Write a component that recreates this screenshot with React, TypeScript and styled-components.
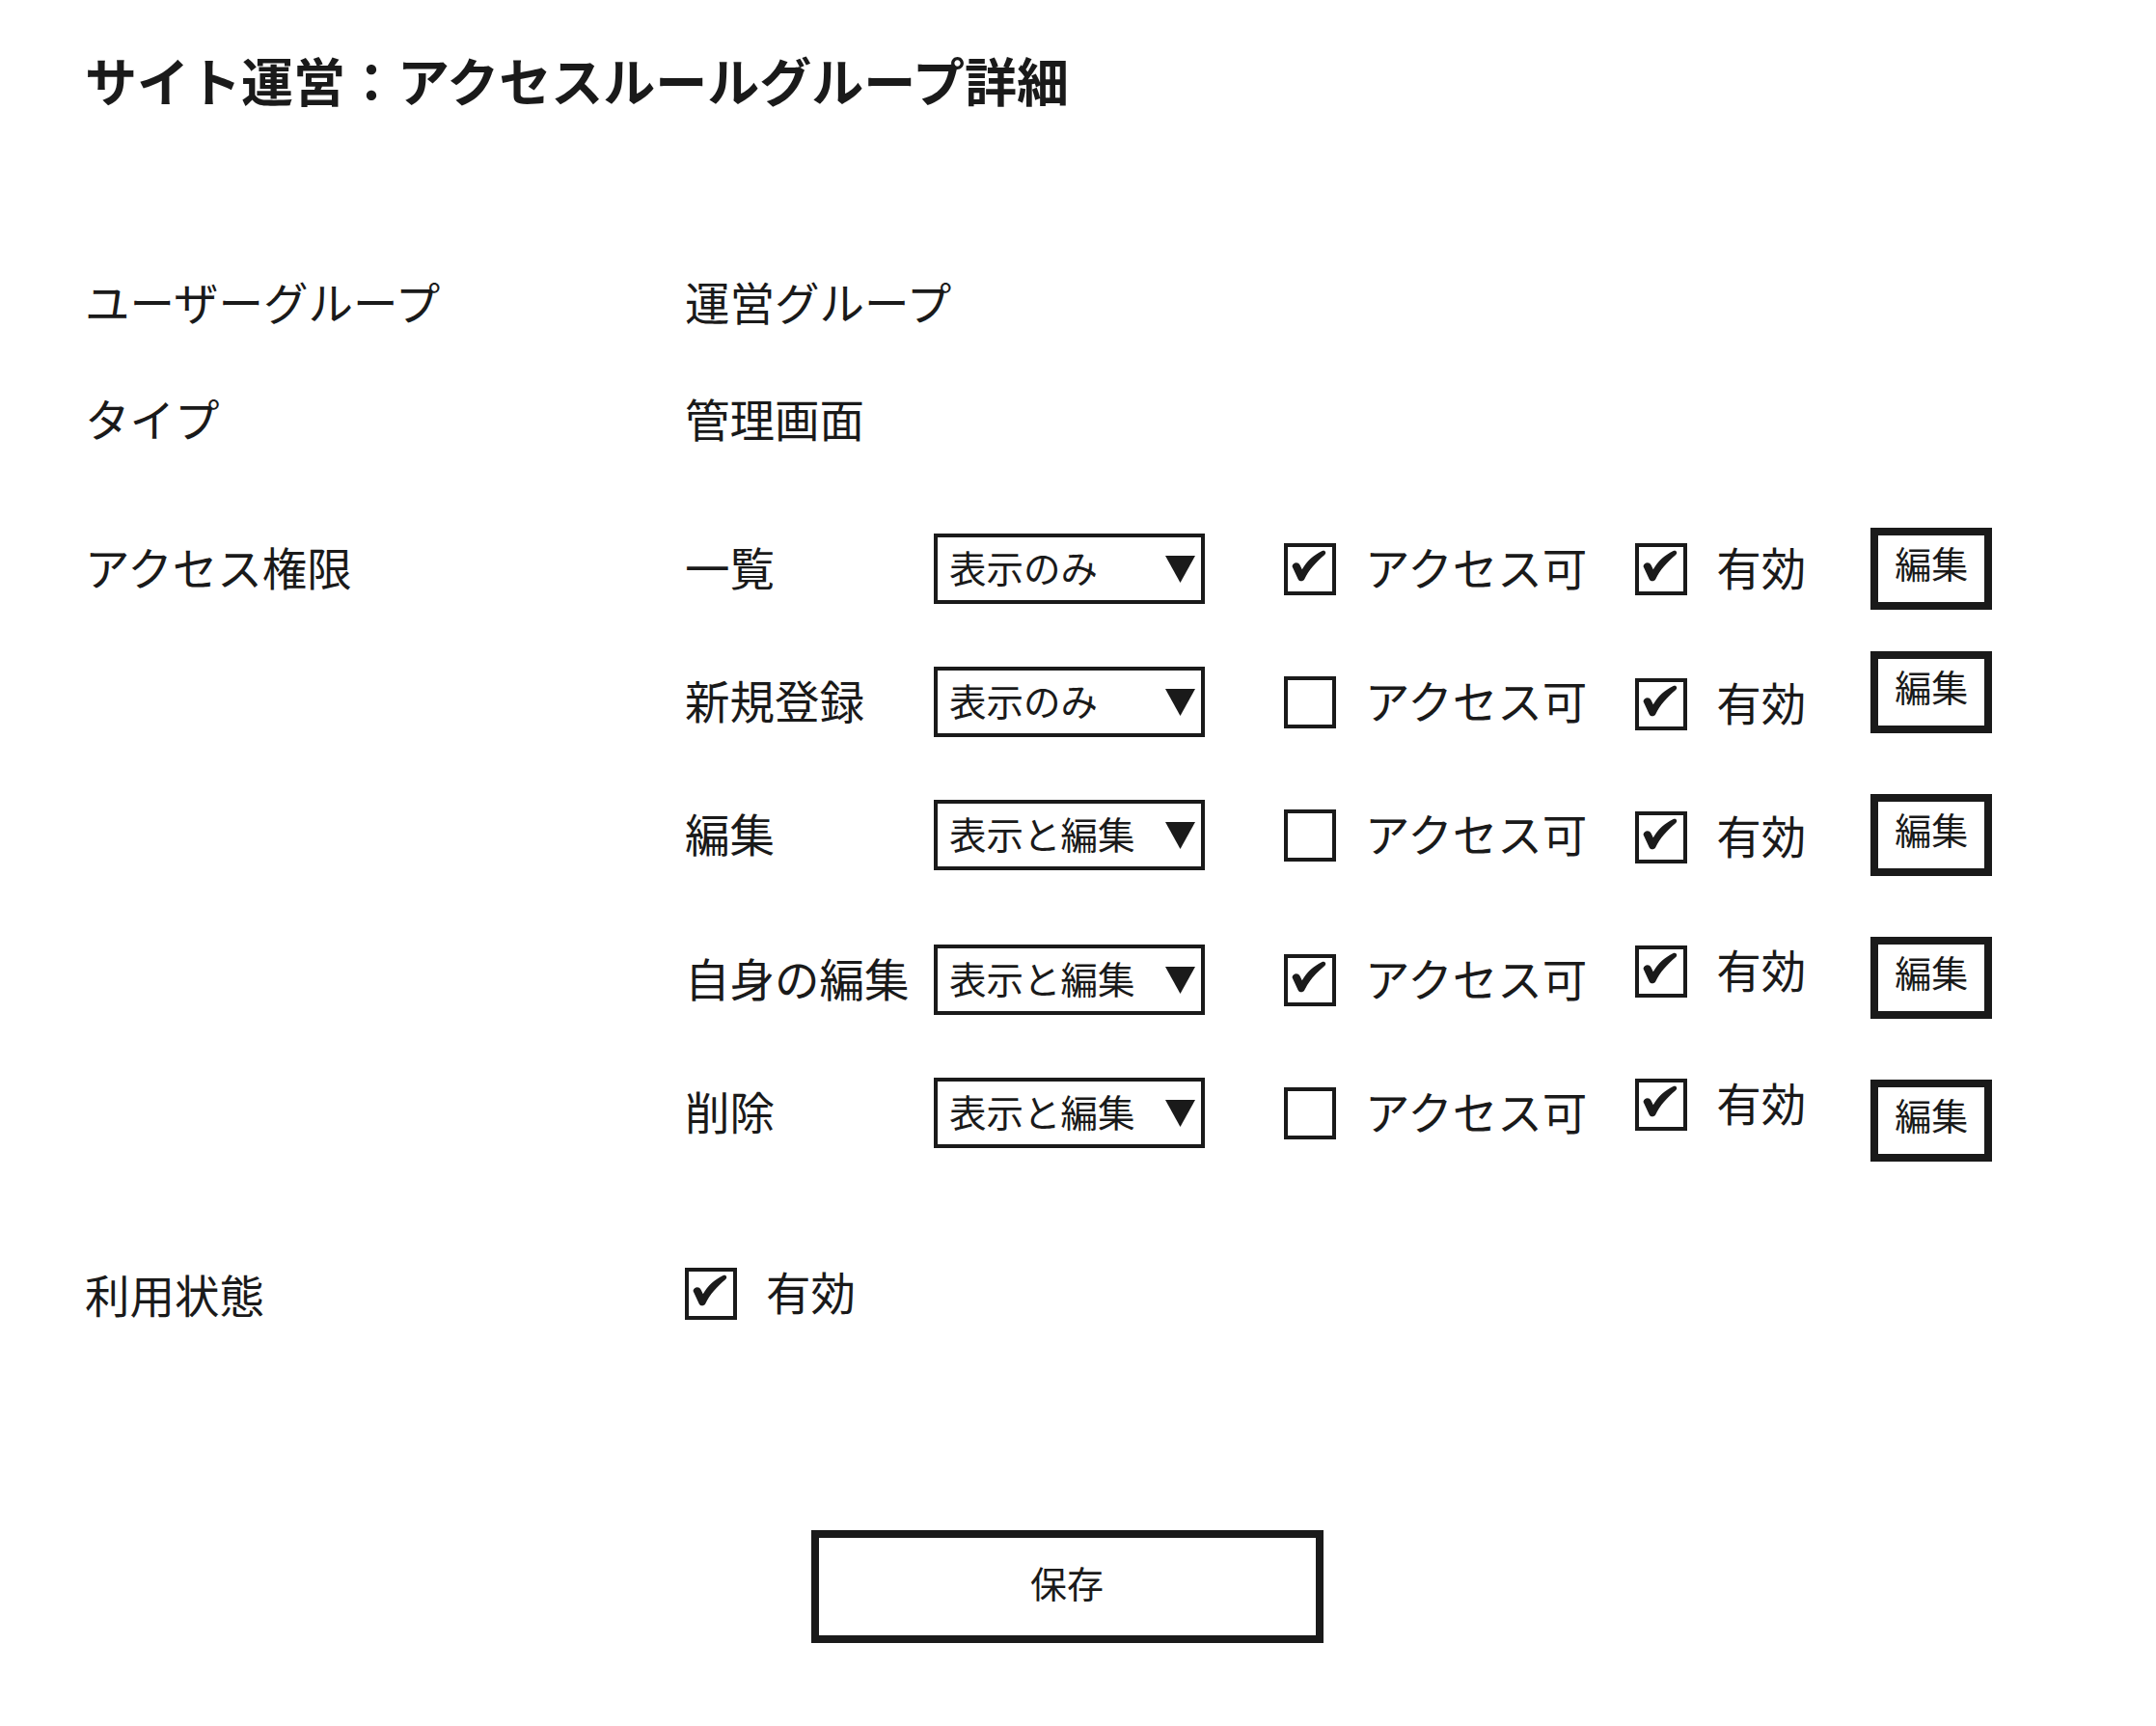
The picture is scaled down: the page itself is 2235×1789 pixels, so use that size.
import React from 'react'
import styled, { createGlobalStyle } from 'styled-components'

type Rule = {
  name: string
  mode: string
  access: boolean
  enabled: boolean
  top: number
  enShift: number
  editShift: number
}

const rules: Rule[] = [
  { name: '一覧', mode: '表示のみ', access: true, enabled: true, top: 0, enShift: 0, editShift: 0 },
  { name: '新規登録', mode: '表示のみ', access: false, enabled: true, top: 53, enShift: 2, editShift: -10 },
  { name: '編集', mode: '表示と編集', access: false, enabled: true, top: 53, enShift: 2, editShift: 0 },
  { name: '自身の編集', mode: '表示と編集', access: true, enabled: true, top: 65, enShift: -9, editShift: -2 },
  { name: '削除', mode: '表示と編集', access: false, enabled: true, top: 53, enShift: -9, editShift: 8 },
]

// heavy check mark, drawn in the 46px inner area of the box
const Check: React.FC<{ checked: boolean }> = ({ checked }) => (
  <Box>
    {checked && (
      <svg width="46" height="46" viewBox="0 0 46 46">
        <path
          d="M4.5 20 C5.5 15.6 10.8 15 12.6 18.8 L14.8 23.2 C19.6 14.8 26.6 8.3 35.6 4 C38.9 2.8 40.5 6.1 38 8.2 C29.2 15.6 21.8 23.6 17.3 33.2 C15.8 36.2 11.6 36 10.5 33 Z"
          fill="#1a1a1a"
        />
      </svg>
    )}
  </Box>
)

const App: React.FC = () => {
  return (
    <>
      <GlobalStyle />
      <Page>
        <Title>サイト運営：アクセスルールグループ詳細</Title>

        <Field $top={162}>
          <FieldLabel>ユーザーグループ</FieldLabel>
          <PlainValue>運営グループ</PlainValue>
        </Field>

        <Field $top={36}>
          <FieldLabel>タイプ</FieldLabel>
          <PlainValue>管理画面</PlainValue>
        </Field>

        <Field $top={69}>
          <FieldLabel>アクセス権限</FieldLabel>
          <div>
            {rules.map(r => (
              <RuleRow key={r.name} $top={r.top}>
                <RuleName>{r.name}</RuleName>
                <Select>
                  <span>{r.mode}</span>
                  <svg width="31" height="28" viewBox="0 0 31 28">
                    <polygon points="0,0 31,0 15.5,28" fill="#1a1a1a" />
                  </svg>
                </Select>
                <CheckLabel $shift={0} $after={50} $gap={30} $first>
                  <Check checked={r.access} />
                  <Caption>アクセス可</Caption>
                </CheckLabel>
                <CheckLabel $shift={r.enShift} $after={67} $gap={30}>
                  <Check checked={r.enabled} />
                  <Caption>有効</Caption>
                </CheckLabel>
                <EditButton $shift={r.editShift}>編集</EditButton>
              </RuleRow>
            ))}
          </div>
        </Field>

        <Field $top={105}>
          <FieldLabel>利用状態</FieldLabel>
          <PlainValue>
            <CheckLabel $shift={0} $after={0} $gap={30}>
              <Check checked />
              <Caption>有効</Caption>
            </CheckLabel>
          </PlainValue>
        </Field>

        <Footer>
          <SaveButton>保存</SaveButton>
        </Footer>
      </Page>
    </>
  )
}

export default App

const ink = '#1a1a1a'
const jp = `"Noto Sans CJK JP", "Noto Sans", sans-serif`

const GlobalStyle = createGlobalStyle`
  html, body {
    margin: 0;
    background: #fff;
  }
  body {
    font-family: ${jp};
    color: ${ink};
  }
`

const Page = styled('main')`
  padding: 56px 111px 80px 88px;
`

const Title = styled('h1')`
  margin: 0;
  font-size: 54px;
  line-height: 54px;
  font-weight: 700;
`

const Field = styled('section')<{ $top: number }>`
  display: grid;
  grid-template-columns: 622px 1fr;
  align-items: start;
  margin-top: ${p => p.$top}px;
`

const FieldLabel = styled('div')`
  box-sizing: border-box;
  height: 85px;
  padding-bottom: 6px;
  display: flex;
  align-items: center;
  font-size: 46.5px;
  white-space: nowrap;
`

const PlainValue = styled(FieldLabel)``

const RuleRow = styled('div')<{ $top: number }>`
  display: flex;
  align-items: center;
  height: 85px;
  margin-top: ${p => p.$top}px;
`

const RuleName = styled('div')`
  width: 258px;
  padding-bottom: 6px;
  font-size: 46.5px;
  white-space: nowrap;
`

const Select = styled('div')`
  box-sizing: border-box;
  width: 281px;
  height: 73px;
  border: 4px solid ${ink};
  padding: 0 6px 0 12px;
  display: flex;
  align-items: center;
  justify-content: space-between;
  font-size: 38.5px;
  white-space: nowrap;

  span {
    padding-bottom: 5px;
  }
`

const shift = (s: number) => (s < 0 ? `margin-bottom: ${-2 * s}px;` : `margin-top: ${2 * s}px;`)

const CheckLabel = styled('label')<{ $shift: number; $after: number; $gap: number; $first?: boolean }>`
  display: flex;
  align-items: center;
  gap: ${p => p.$gap}px;
  font-size: 46.5px;
  white-space: nowrap;
  margin-left: ${p => (p.$first ? 82 : 0)}px;
  margin-right: ${p => p.$after}px;
  ${p => shift(p.$shift)}
`

const Caption = styled('span')`
  padding-bottom: 6px;
`

const Box = styled('span')`
  box-sizing: border-box;
  width: 54px;
  height: 54px;
  border: 4px solid ${ink};
  display: flex;
  align-items: center;
  justify-content: center;
  background: #fff;
`

const EditButton = styled('button')<{ $shift: number }>`
  box-sizing: border-box;
  width: 126px;
  height: 85px;
  border: 8px solid ${ink};
  background: #fff;
  color: ${ink};
  font-family: ${jp};
  font-size: 38px;
  padding: 0 0 14px;
  ${p => shift(p.$shift)}
`

const Footer = styled('div')`
  display: flex;
  justify-content: center;
  margin-top: 200px;
`

const SaveButton = styled('button')`
  box-sizing: border-box;
  width: 531px;
  height: 117px;
  border: 8px solid ${ink};
  background: #fff;
  color: ${ink};
  font-family: ${jp};
  font-size: 38px;
  padding: 0 0 10px;
`
